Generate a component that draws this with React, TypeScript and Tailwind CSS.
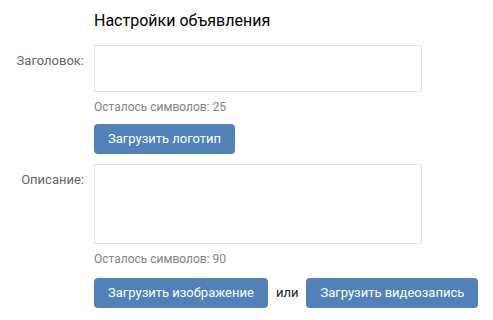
const font = { fontFamily: "Roboto, 'Noto Sans', sans-serif" };

function Field({ label, height, left }: { label: string; height: string; left: number }) {
  return (
    <div className="flex">
      <div className="w-[94px] shrink-0 pr-[10px] pt-2 text-right text-[13px] leading-4 text-[#656565]">
        {label}
      </div>
      <div>
        <div className={`w-[328px] ${height} border border-[#dfe2e8] bg-white`} />
        <div className="mt-[7px] text-[12px] leading-4 text-[#828282]">
          Осталось символов: {left}
        </div>
      </div>
    </div>
  );
}

function BlueButton({ children }: { children: React.ReactNode }) {
  return (
    <button className="h-[30px] rounded-[4px] bg-[#5181b8] px-[14px] text-[13px] leading-[30px] text-white">
      {children}
    </button>
  );
}

export default function App() {
  return (
    <div className="h-[320px] w-[493px] bg-white pt-[11px]" style={font}>
      <div className="pl-[94px] text-[16px] leading-5 font-normal text-black">
        Настройки объявления
      </div>
      <div className="mt-[14px]">
        <Field label="Заголовок:" height="h-[47px]" left={25} />
      </div>
      <div className="mt-[9px] pl-[94px]">
        <BlueButton>Загрузить логотип</BlueButton>
      </div>
      <div className="mt-[10px]">
        <Field label="Описание:" height="h-[80px]" left={90} />
      </div>
      <div className="mt-[11px] flex items-center pl-[94px]">
        <BlueButton>Загрузить изображение</BlueButton>
        <span className="mx-[8px] text-[13px] text-[#222]">или</span>
        <BlueButton>Загрузить видеозапись</BlueButton>
      </div>
    </div>
  );
}
